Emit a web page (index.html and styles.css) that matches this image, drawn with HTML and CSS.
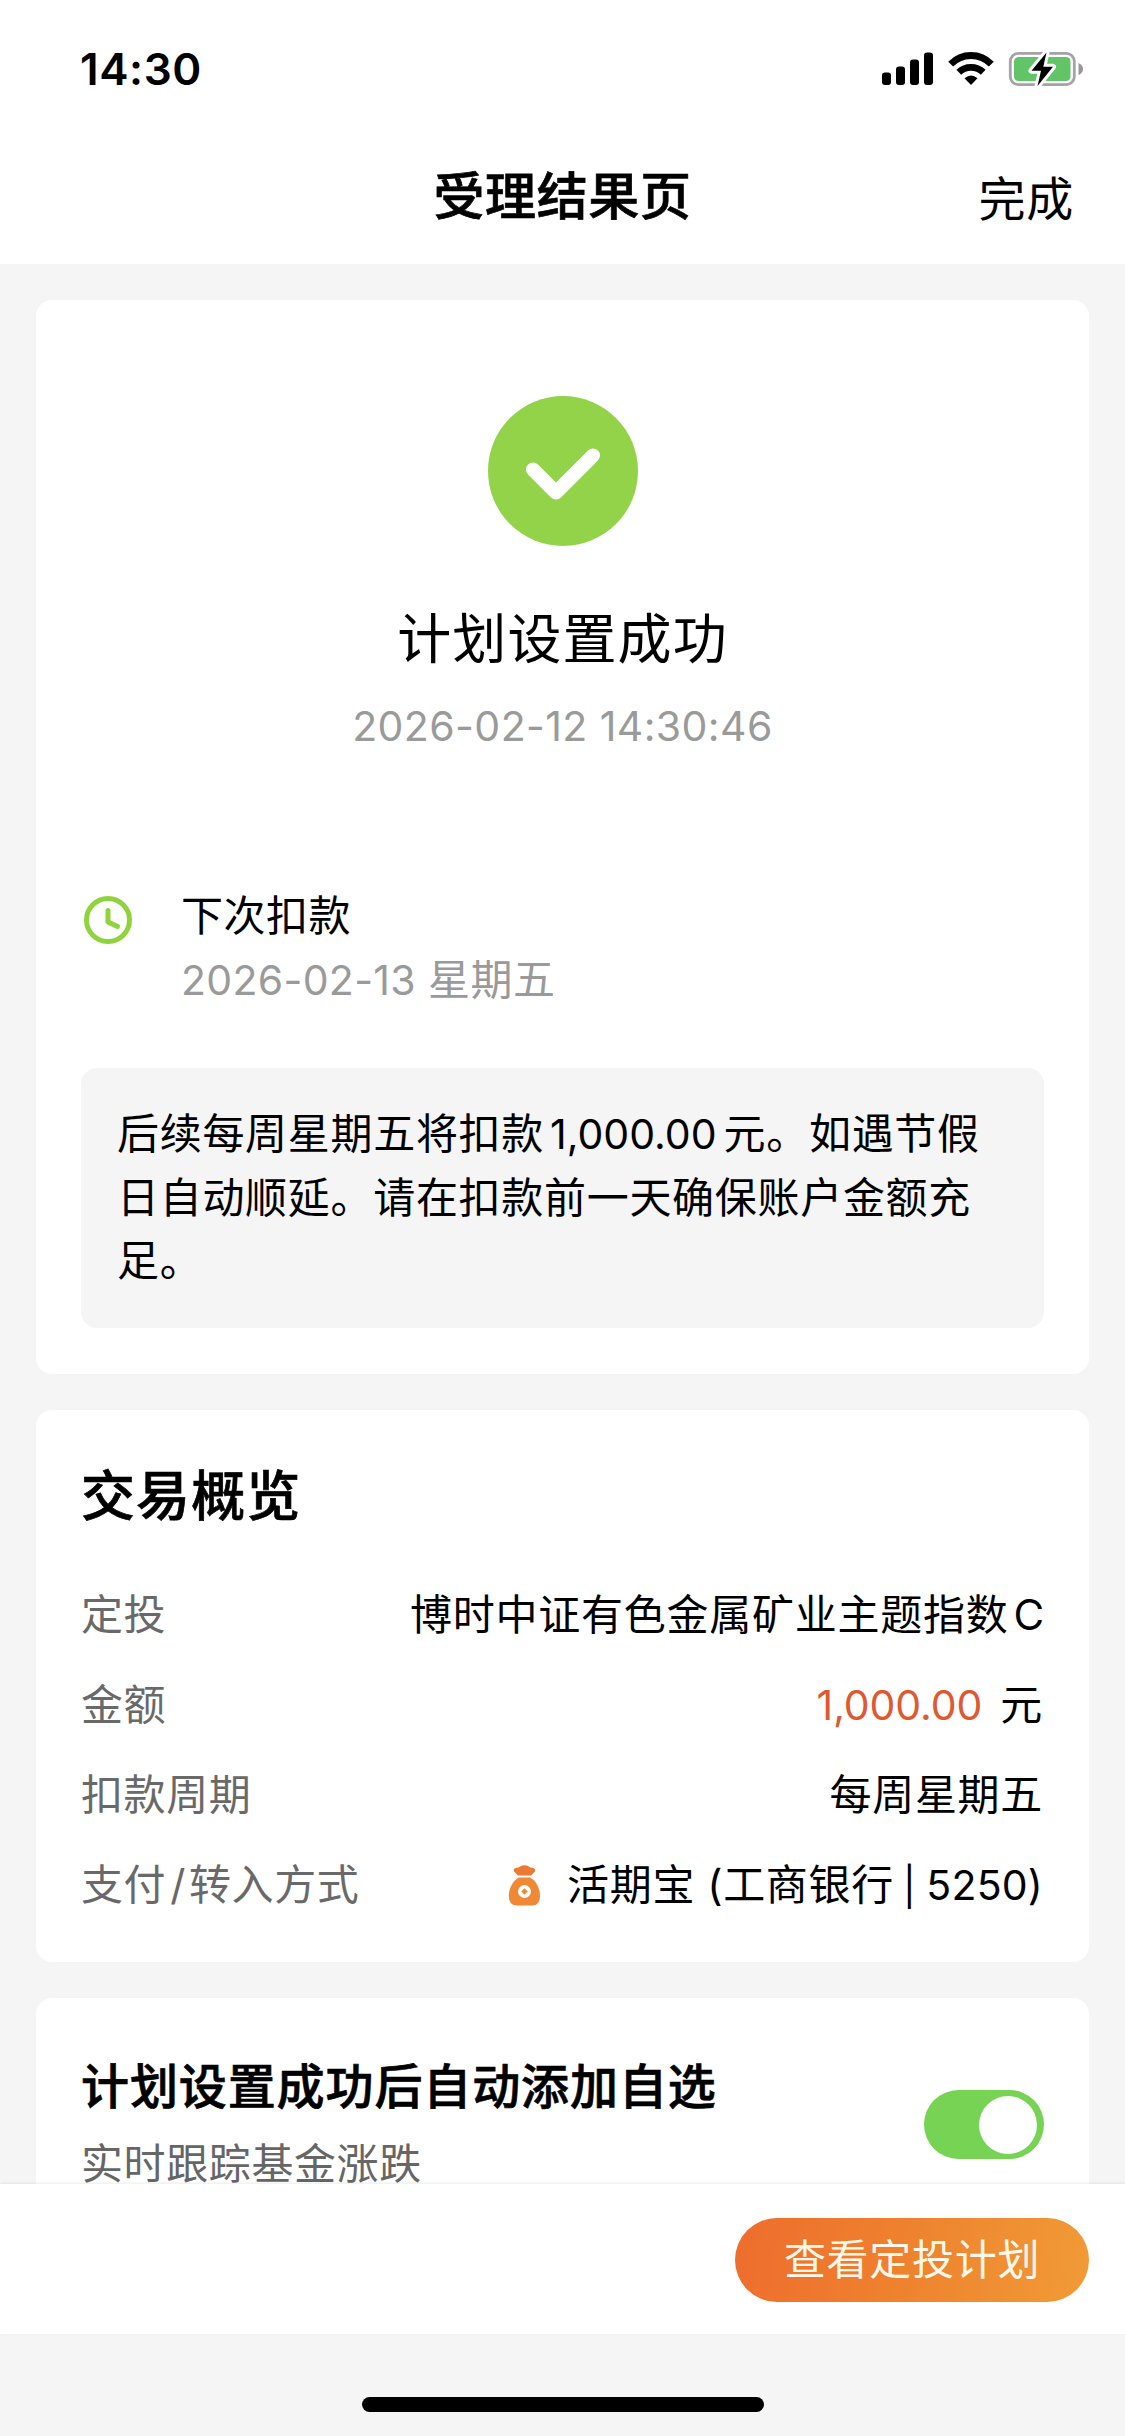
FILE: index.html
```html
<!DOCTYPE html>
<html lang="zh-CN">
<head>
<meta charset="utf-8">
<title>受理结果页</title>
<link rel="stylesheet" href="styles.css">
</head>
<body>
<div class="screen">
  <header class="top">
    <div class="status">
      <span class="time">14:30</span>
      <svg class="status-icons" width="202" height="36" viewBox="0 0 202 36">
        <rect x="1" y="21.5" width="9" height="12.5" rx="3"/>
        <rect x="15" y="15.500" width="9" height="18.500" rx="3"/>
        <rect x="29" y="8.500" width="9" height="25.500" rx="3"/>
        <rect x="43" y="1.500" width="9" height="32.500" rx="3"/>
        <g fill="none" stroke="#000" stroke-width="6.800">
          <path d="M69.700 13.200 A28 28 0 0 1 110.300 13.200"/>
          <path d="M77.800 21.300 A17.500 17.500 0 0 1 102.200 21.300"/>
        </g>
        <path d="M90 34 L83.500 27.300 Q90 21.700 96.500 27.300 Z"/>
        <rect x="129.300" y="2.300" width="64" height="31.400" rx="8" fill="#fff" stroke="#a3a3a8" stroke-width="2.800"/>
        <rect x="133" y="6" width="56.500" height="24" rx="4.500" fill="#62c466"/>
        <path d="M197.500 12 Q202 14 202 18 Q202 22 197.500 24 Z" fill="#98989c"/>
        <path d="M165.500 1.500 L150.500 19.700 H160 L156.500 35 L172 15.800 H162.300 Z" fill="#000" stroke="#fff" stroke-width="6" paint-order="stroke" stroke-linejoin="round"/>
      </svg>
    </div>
    <nav class="nav">
      <h1 class="nav-title">受理结果页</h1>
      <a class="nav-done">完成</a>
    </nav>
  </header>

  <main class="content">
    <section class="card result">
      <svg class="ok" width="150" height="150" viewBox="0 0 150 150">
        <circle cx="75" cy="75" r="75" fill="#92d34a"/>
        <path d="M45 73.500 L68 96.500 L105 59.500" fill="none" stroke="#fff" stroke-width="14" stroke-linecap="round" stroke-linejoin="round"/>
      </svg>
      <h2 class="result-title">计划设置成功</h2>
      <p class="result-time">2026-02-12 14:30:46</p>
      <div class="next">
        <svg class="clock" width="48" height="48" viewBox="0 0 48 48" fill="none" stroke="#8fd33f" stroke-width="5" stroke-linecap="round" stroke-linejoin="round">
          <circle cx="24" cy="24" r="21.500"/>
          <path d="M24 14.500 V26 L33.500 30.500"/>
        </svg>
        <div class="next-text">
          <p class="next-label">下次扣款</p>
          <p class="next-date"><span class="next-day">2026-02-13</span> 星期五</p>
        </div>
      </div>
      <p class="note">后续每周星期五将扣款<span class="note-sum">1,000.00</span>元。如遇节假日自动顺延。请在扣款前一天确保账户金额充足。</p>
    </section>

    <section class="card overview">
      <h2 class="overview-title">交易概览</h2>
      <dl class="rows">
        <div class="row"><dt>定投</dt><dd class="fund">博时中证有色金属矿业主题指数<span class="share">C</span></dd></div>
        <div class="row"><dt>金额</dt><dd><span class="sum">1,000.00</span>元</dd></div>
        <div class="row"><dt>扣款周期</dt><dd>每周星期五</dd></div>
        <div class="row"><dt>支付<span class="slash">/</span>转入方式</dt><dd class="pay">
          <svg class="bag" width="33" height="41" viewBox="0 0 33 41">
            <path d="M10 10.500 L6 6.500 Q5 2.500 10.500 2.500 Q16.500 -2 22.500 2.500 Q28 2.500 27 6.500 L23 10.500 Z" fill="#ec7a35"/>
            <path d="M11 12.500 H22 C28 15.500 32 23 32 31 Q32 40.500 24 40.500 H9 Q.8 40.500 .8 31 C.8 23 5 15.500 11 12.500 Z" fill="#f08935"/>
            <circle cx="16.500" cy="26.500" r="6.500" fill="#fff"/>
            <path d="M16.500 23.200 L19.800 26.500 L16.500 29.800 L13.200 26.500 Z" fill="#e8893f"/>
          </svg>
          <span>活期宝</span><span class="bank">(工商银行<span class="pipe">|</span><span class="tail">5250)</span></span></dd></div>
      </dl>
    </section>

    <section class="card watch">
      <div>
        <h3 class="watch-title">计划设置成功后自动添加自选</h3>
        <p class="watch-sub">实时跟踪基金涨跌</p>
      </div>
      <span class="toggle"><i class="knob"></i></span>
    </section>
  </main>

  <footer class="bar"><a class="btn">查看定投计划</a></footer>
  <div class="home"><i class="home-line"></i></div>
</div>
</body>
</html>
```
FILE: styles.css
```css
* { box-sizing: border-box; margin: 0; padding: 0; }

body {
  background: #f5f5f5;
  color: #000;
  font-family: Inter, "Noto Sans CJK SC", sans-serif;
  font-size: 42px;
  letter-spacing: 0.7px;
}

.screen {
  display: flex;
  flex-direction: column;
  width: 1125px;
  height: 2436px;
  overflow: hidden;
}

.top { flex: none; height: 264px; background: #fff; }

.status {
  display: flex;
  justify-content: space-between;
  align-items: center;
  height: 138px;
  padding: 0 42px 0 80px;
}
.time { font-size: 44px; font-weight: 600; letter-spacing: 0.6px; line-height: 60px; }
.status-icons { display: block; }

.nav {
  display: grid;
  grid-template-columns: 1fr auto 1fr;
  align-items: center;
  height: 118px;
  padding: 0 51px;
}
.nav-title,
.overview-title,
.watch-title { font-weight: 500; -webkit-text-stroke: 0.7px #000; }
.nav-title { grid-column: 2; font-size: 51px; letter-spacing: 0.6px; line-height: 60px; }
.nav-done { justify-self: end; padding-top: 3px; font-size: 47px; line-height: 60px; }

.content {
  flex: none;
  display: flex;
  flex-direction: column;
  gap: 36px;
  height: 1920px;
  padding: 36px 36px 0;
  overflow: hidden;
}

.card { flex: none; border-radius: 16px; background: #fff; padding: 0 45px; }

.result {
  display: flex;
  flex-direction: column;
  align-items: center;
  height: 1074px;
  padding-top: 96px;
}
.result-title { margin-top: 59px; font-size: 54px; font-weight: 400; letter-spacing: 1.1px; line-height: 70px; }
.result-time { margin-top: 21px; color: #9a9a9a; font-size: 41px; letter-spacing: 0.4px; line-height: 60px; }

.next { display: flex; align-self: stretch; gap: 49px; margin-top: 129px; padding-left: 3px; }
.clock { flex: none; margin-top: 11px; }
.next-label { padding-top: 1px; letter-spacing: 0.5px; line-height: 60px; }
.next-date { margin-top: 4px; color: #9a9a9a; letter-spacing: 0.4px; line-height: 60px; }
.next-day { font-size: 41px; letter-spacing: 0.3px; }

.note {
  align-self: stretch;
  height: 260px;
  margin-top: 58px;
  padding: 34px 36px;
  border-radius: 16px;
  background: #f5f5f5;
  line-height: 63.200px;
}
.note-sum { margin: 0 7px 0 6px; font-size: 41px; letter-spacing: 0; }

.overview { height: 552px; padding-top: 52px; }
.overview-title { font-size: 54px; letter-spacing: 1.1px; line-height: 70px; }
.rows { margin-top: 38px; }
.row { display: flex; justify-content: space-between; align-items: center; height: 90px; line-height: 60px; }
.row dt { color: #696969; letter-spacing: 0.6px; }
.row dd { margin-right: 1px; }
.row .fund { margin-right: -1px; letter-spacing: 0.75px; }
.share { margin-left: 5px; }
.slash { margin: 0 3px 0 4px; }
.sum { margin-right: 18px; color: #e0582f; font-size: 41px; letter-spacing: -0.1px; }
.pay { display: flex; align-items: center; }
.bag { margin-right: 26px; }
.bank { margin-left: 12px; }
.pipe { margin: 0 10px 0 9px; font-size: 38px; }
.tail { font-size: 41px; letter-spacing: 0.2px; }

.watch { display: flex; justify-content: space-between; height: 240px; padding-top: 59px; }
.watch-title { font-size: 48px; letter-spacing: 0.9px; line-height: 60px; }
.watch-sub { margin-top: 17px; color: #666; letter-spacing: 0.6px; line-height: 60px; }
.toggle { flex: none; width: 120px; height: 69px; margin-top: 33px; padding: 6px 7px 6px 55px; border-radius: 35px; background: #77d353; }
.knob { display: block; width: 58px; height: 58px; border-radius: 50%; background: #fff; }

.bar {
  position: relative;
  flex: none;
  display: flex;
  justify-content: flex-end;
  align-items: flex-start;
  height: 150px;
  padding: 34px 36px 0;
  background: #fff;
  box-shadow: 0 -1px 3px rgba(0, 0, 0, 0.08);
}
.btn {
  width: 354px;
  height: 84px;
  border-radius: 42px;
  background: linear-gradient(100deg, #ee6d2d, #ee832f 50%, #f19b36);
  color: #fff8ea;
  line-height: 83px;
  text-align: center;
}

.home { display: flex; justify-content: center; padding-top: 63px; }
.home-line { width: 402px; height: 15px; border-radius: 8px; background: #000; }
```
